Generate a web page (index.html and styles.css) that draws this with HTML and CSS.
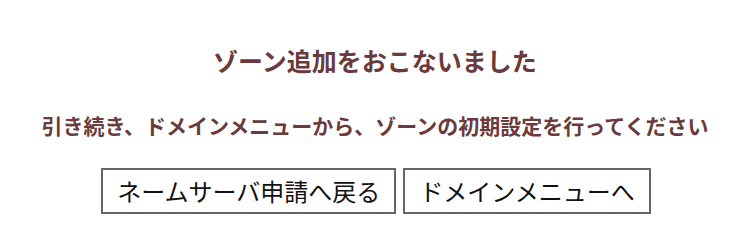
FILE: index.html
```html
<!DOCTYPE html>
<html lang="ja">
<head>
  <meta charset="UTF-8">
  <title>ゾーン追加完了</title>
  <link rel="stylesheet" href="styles.css">
</head>
<body>
  <div class="result">
    <h1>ゾーン追加をおこないました</h1>
    <p>引き続き、ドメインメニューから、ゾーンの初期設定を行ってください</p>
    <div class="actions">
      <button class="btn">ネームサーバ申請へ戻る</button>
      <button class="btn">ドメインメニューへ</button>
    </div>
  </div>
</body>
</html>
```

FILE: styles.css
```css
body {
  margin: 0;
  background: #ffffff;
  font-family: "Noto Sans CJK JP", "Noto Sans", sans-serif;
}
.result {
  padding-top: 45px;
  text-align: center;
}
h1 {
  margin: 0;
  font-size: 25px;
  line-height: 30px;
  font-weight: bold;
  color: #6a3a3c;
}
p {
  margin: 35px 0 0;
  font-size: 21px;
  line-height: 30px;
  font-weight: bold;
  color: #6a3a3c;
}
.actions {
  display: flex;
  justify-content: center;
  gap: 7px;
  margin-top: 28px;
  padding-left: 2px;
}
.btn {
  font-family: inherit;
  font-size: 24px;
  line-height: 42px;
  padding: 0 14px;
  color: #111111;
  background: #ffffff;
  border: 2px solid #666666;
  border-radius: 0;
}
```
